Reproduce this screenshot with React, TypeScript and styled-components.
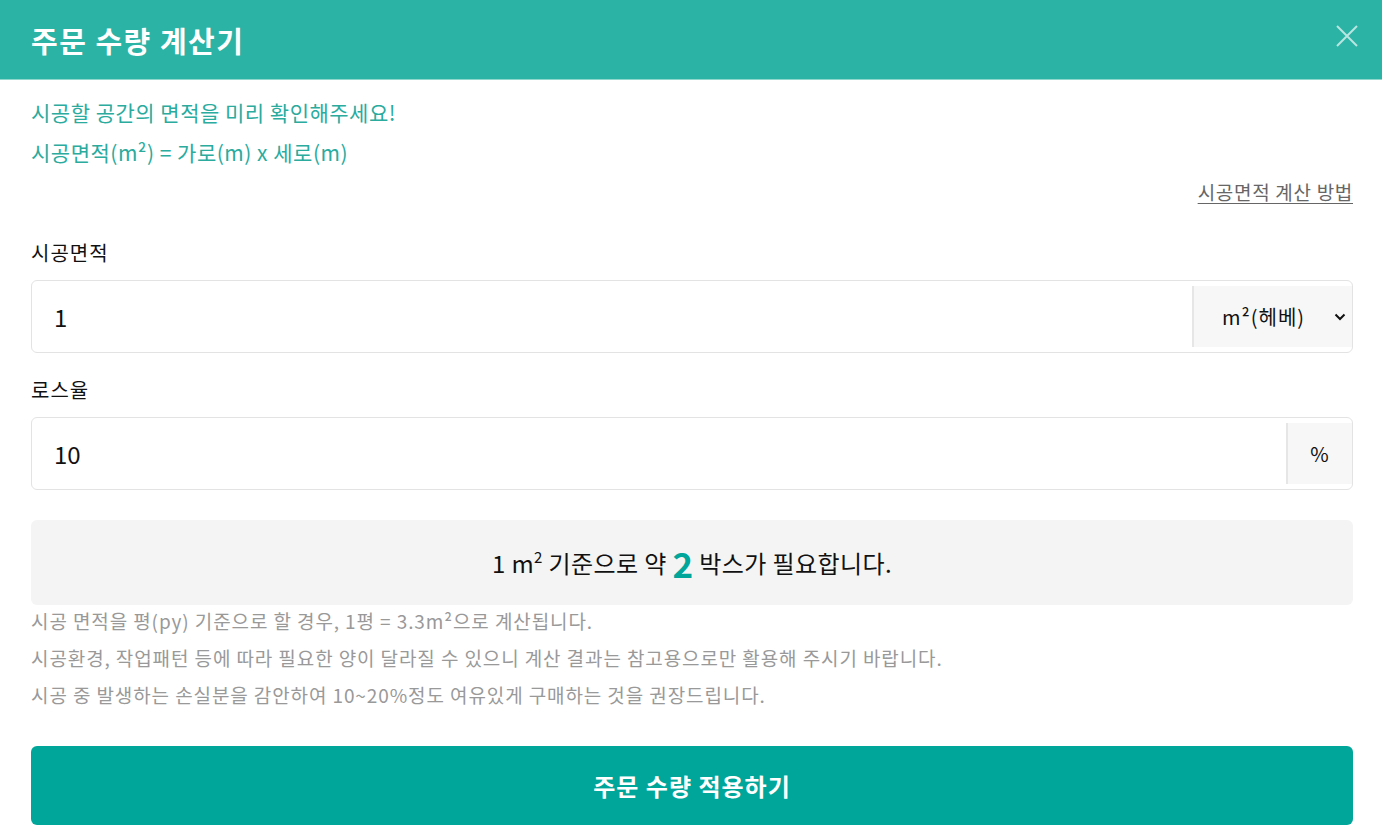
import React from 'react';
import styled, { createGlobalStyle } from 'styled-components';

const notes = [
  '시공 면적을 평(py) 기준으로 할 경우, 1평 = 3.3m²으로 계산됩니다.',
  '시공환경, 작업패턴 등에 따라 필요한 양이 달라질 수 있으니 계산 결과는 참고용으로만 활용해 주시기 바랍니다.',
  '시공 중 발생하는 손실분을 감안하여 10~20%정도 여유있게 구매하는 것을 권장드립니다.',
];

export default function App() {
  return (
    <>
      <GlobalStyle />
      <Modal>
        <Header>
          <Title>주문 수량 계산기</Title>
          <CloseButton aria-label='close'>
            <svg width='22' height='22' viewBox='0 0 22 22'>
              <path d='M1 1L21 21M21 1L1 21' stroke='#b9e6e1' strokeWidth='2' />
            </svg>
          </CloseButton>
        </Header>
        <Body>
          <Guide>
            <GuideLine>시공할 공간의 면적을 미리 확인해주세요!</GuideLine>
            <GuideLine>시공면적(m²) = 가로(m) x 세로(m)</GuideLine>
          </Guide>
          <HelpRow>
            <HelpLink>시공면적 계산 방법</HelpLink>
          </HelpRow>
          <Field>
            <Label>시공면적</Label>
            <InputBox>
              <Value>1</Value>
              <Addon width='160px'>
                <span>m²(헤베)</span>
                <svg width='12' height='8' viewBox='0 0 12 8'>
                  <path d='M1.5 1.5L6 6L10.5 1.5' stroke='#111' strokeWidth='2' fill='none' />
                </svg>
              </Addon>
            </InputBox>
          </Field>
          <Field>
            <Label>로스율</Label>
            <InputBox>
              <Value>10</Value>
              <Addon width='66px' center>
                %
              </Addon>
            </InputBox>
          </Field>
          <Result>
            1 m<sup>2</sup> 기준으로 약 <Count>2</Count> 박스가 필요합니다.
          </Result>
          <Notes>
            {notes.map((item) => (
              <Note key={item}>{item}</Note>
            ))}
          </Notes>
          <ApplyButton>주문 수량 적용하기</ApplyButton>
        </Body>
      </Modal>
    </>
  );
}

const GlobalStyle = createGlobalStyle`
  * { box-sizing: border-box; }
  body {
    margin: 0;
    background: #fff;
    font-family: 'Noto Sans CJK KR', 'Noto Sans', sans-serif;
  }
`;

const Modal = styled.div`
  width: 1382px;
  height: 840px;
  background: #fff;
  overflow: hidden;
`;

const Header = styled.div`
  display: flex;
  align-items: center;
  justify-content: space-between;
  height: 80px;
  padding: 0 24px 0 31px;
  background-color: #2bb3a5;
  border-bottom: 1px solid #8fd6cd;
`;

const Title = styled.h1`
  margin: 0;
  color: #fff;
  font-size: 29px;
  font-weight: 700;
  letter-spacing: 1.5px;
`;

const CloseButton = styled.button`
  display: flex;
  padding: 0;
  margin-top: -8px;
  border: none;
  background: none;
`;

const Body = styled.div`
  padding: 0 29px 0 31px;
`;

const Guide = styled.div`
  padding-top: 12px;
`;

const GuideLine = styled.p`
  margin: 0;
  color: #2aab9e;
  font-size: 21px;
  line-height: 40px;
  letter-spacing: 0.5px;
`;

const HelpRow = styled.div`
  display: flex;
  justify-content: flex-end;
`;

const HelpLink = styled.a`
  color: #666;
  font-size: 19px;
  line-height: 40px;
  letter-spacing: 0.7px;
  text-decoration: underline;
  text-underline-offset: 3px;
`;

const Field = styled.div`
  margin-top: 28px;

  & + & {
    margin-top: 24px;
  }
`;

const Label = styled.div`
  color: #111;
  font-size: 20px;
  line-height: 26px;
  letter-spacing: 1px;
  margin-bottom: 14px;
`;

const InputBox = styled.div`
  display: flex;
  height: 73px;
  border: 1px solid #e3e3e3;
  border-radius: 6px;
  overflow: hidden;
`;

const Value = styled.div`
  flex: 1;
  display: flex;
  align-items: center;
  padding-left: 22px;
  color: #111;
  font-size: 24px;
`;

const Addon = styled.div<{ width: string; center?: boolean }>`
  display: flex;
  align-items: center;
  justify-content: ${({ center }) => (center ? 'center' : 'space-between')};
  gap: 12px;
  width: ${({ width }) => width};
  margin: 5px 0;
  padding: ${({ center }) => (center ? '0' : '0 6px 0 28px')};
  background: #f7f7f7;
  border-left: 2px solid #e6e6e6;
  color: #111;
  font-size: 20px;
  letter-spacing: 1px;
`;

const Result = styled.div`
  display: flex;
  align-items: center;
  justify-content: center;
  height: 85px;
  margin-top: 30px;
  background: #f4f4f4;
  border-radius: 6px;
  color: #111;
  font-size: 24px;
  letter-spacing: 0.4px;
  white-space: pre;

  sup {
    font-size: 15px;
    line-height: 0;
    margin-top: -12px;
  }
`;

const Count = styled.b`
  color: #00a69a;
  font-size: 35px;
  font-weight: 700;
  line-height: 1;
`;

const Notes = styled.div`
  margin-top: -3px;
`;

const Note = styled.p`
  margin: 0;
  color: #999;
  font-size: 19px;
  line-height: 37px;
  letter-spacing: 0.9px;
`;

const ApplyButton = styled.button`
  display: block;
  width: 100%;
  height: 79px;
  margin-top: 33px;
  border: none;
  border-radius: 6px;
  background: #00a69a;
  color: #fff;
  font-family: inherit;
  font-size: 24px;
  font-weight: 700;
  letter-spacing: 1px;
`;
